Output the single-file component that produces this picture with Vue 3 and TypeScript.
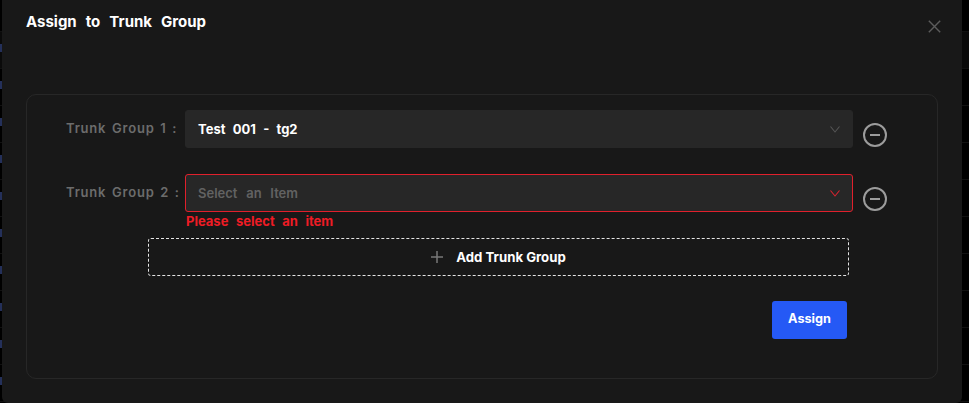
<script setup lang="ts">
import { ref } from 'vue'

interface Row {
  label: string
  value: string
  error: string
}

const rows = ref<Row[]>([
  { label: 'Trunk Group 1 :', value: 'Test 001 - tg2', error: '' },
  { label: 'Trunk Group 2 :', value: '', error: 'Please select an item' },
])

const bgLines = Array.from({ length: 12 }, (_, i) => i)
</script>

<template>
  <div class="page">
    <div class="backdrop">
      <div v-for="i in bgLines" :key="i" class="bg-row"><span v-if="i > 0" class="tick"></span></div>
    </div>
    <section class="modal">
      <header class="head">
        <h2 class="title">Assign to Trunk Group</h2>
        <svg class="close" viewBox="0 0 13 13" width="13" height="13" aria-label="Close">
          <path d="M0.8 0.8L12.2 12.2M12.2 0.8L0.8 12.2" stroke="#5c5c5c" stroke-width="1.4" fill="none" />
        </svg>
      </header>
      <div class="panel">
        <div v-for="row in rows" :key="row.label" class="row">
          <label class="label">{{ row.label }}</label>
          <div class="field">
            <div class="select" :class="{ invalid: row.error }">
              <span :class="row.value ? 'value' : 'placeholder'">{{ row.value || 'Select an Item' }}</span>
              <svg class="chev" viewBox="0 0 10 7" width="10" height="7">
                <path d="M0.5 0.5L5 6L9.5 0.5" fill="none" :stroke="row.error ? '#d8232f' : '#555555'" stroke-width="1.1" />
              </svg>
            </div>
            <div v-if="row.error" class="error">{{ row.error }}</div>
          </div>
          <svg class="remove" viewBox="0 0 24 24" width="24" height="24">
            <circle cx="12" cy="12" r="11" fill="none" stroke="#9c9c9c" stroke-width="2" />
            <path d="M7 12H17" stroke="#9c9c9c" stroke-width="2" />
          </svg>
        </div>
        <button class="add" type="button">
          <svg viewBox="0 0 12 12" width="12" height="12">
            <path d="M6 0V12M0 6H12" stroke="#777" stroke-width="1.5" />
          </svg>
          <span>Add Trunk Group</span>
        </button>
        <div class="actions">
          <button class="assign" type="button">Assign</button>
        </div>
      </div>
    </section>
  </div>
</template>

<style>
html, body { margin: 0; background: #000; }
</style>

<style scoped>
.page {
  position: relative;
  width: 969px;
  height: 403px;
  overflow: hidden;
  background: #000;
  font-family: "Inter", "Liberation Sans", sans-serif;
}
.backdrop {
  position: absolute;
  left: 0;
  right: 0;
  top: -5px;
}
.bg-row {
  height: 36px;
  border-bottom: 1px solid #111;
  position: relative;
}
.bg-row:nth-child(2) { background: #0a0a0a; }
.tick {
  position: absolute;
  left: 0;
  top: 12px;
  width: 2px;
  height: 8px;
  background: #24305a;
}
.modal {
  position: relative;
  box-sizing: border-box;
  width: 960px;
  height: 403px;
  margin-left: 2px;
  padding: 0 24px 24px;
  background: #181818;
  border-radius: 0 0 6px 6px;
  display: flex;
  flex-direction: column;
}
.head {
  height: 94px;
  flex: none;
  display: flex;
  justify-content: space-between;
  align-items: flex-start;
}
.title {
  margin: 12px 0 0;
  font-size: 15px;
  line-height: 20px;
  font-weight: 700;
  color: #fff;
  word-spacing: 5.5px;
}
.close { margin: 20px -3px 0 0; }
.panel {
  box-sizing: border-box;
  width: 912px;
  height: 285px;
  border: 1px solid #272727;
  border-radius: 10px;
  padding: 15px 50px 0 39px;
}
.row {
  display: flex;
  align-items: flex-start;
  margin-bottom: 26px;
}
.label {
  width: 119px;
  flex: none;
  font-size: 13px;
  font-weight: 600;
  line-height: 36px;
  color: #6c6c6c;
  letter-spacing: 0.8px;
  word-spacing: 1.6px;
  white-space: nowrap;
}
.field { width: 668px; flex: none; position: relative; }
.select {
  box-sizing: border-box;
  height: 38px;
  background: #272727;
  border: 1px solid #272727;
  border-radius: 3px;
  display: flex;
  align-items: center;
  justify-content: space-between;
  padding: 0 12px;
  font-size: 13px;
  font-weight: 600;
}
.select.invalid { border-color: #e0202c; }
.value { color: #fff; font-weight: 700; word-spacing: 4.2px; }
.placeholder { color: #626262; word-spacing: 5.5px; }
.error {
  position: absolute;
  top: 38px;
  left: 1px;
  font-size: 13px;
  line-height: 18px;
  font-weight: 700;
  color: #ee1c25;
  word-spacing: 4.5px;
}
.remove { margin: 13px 0 0 10px; flex: none; }
.add {
  display: flex;
  align-items: center;
  justify-content: center;
  gap: 13px;
  box-sizing: border-box;
  width: 701px;
  height: 38px;
  margin: 0 0 0 82px;
  padding: 0 0 1px;
  background: transparent;
  border: 1px dashed #e4e4e4;
  border-radius: 3px;
  color: #fff;
  font-family: inherit;
  font-size: 13.2px;
  font-weight: 700;
}
.actions {
  display: flex;
  justify-content: flex-end;
  width: 781px;
  margin-top: 25px;
}
.assign {
  width: 75px;
  height: 38px;
  padding: 0 0 3px;
  background: #2559f5;
  color: #fff;
  border: 0;
  border-radius: 3px;
  font-family: inherit;
  font-size: 12.7px;
  font-weight: 700;
}
</style>
